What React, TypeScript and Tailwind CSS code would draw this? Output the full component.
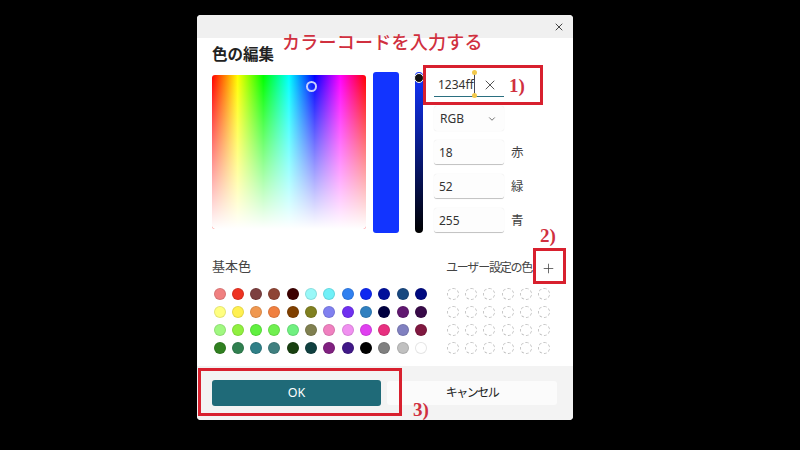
import React from 'react'
import { X, Plus, ChevronDown } from 'lucide-react'

const basicColors = [
  '#f08080', '#ee3322', '#7d4040', '#8e4535', '#3d0000', '#98f8f8', '#70f0f8', '#3080f0', '#0f28f0', '#00109a', '#184880', '#000a80',
  '#ffff80', '#fff050', '#f09850', '#f08040', '#804000', '#808020', '#8080f0', '#7030f0', '#3080c0', '#000040', '#601870', '#380a48',
  '#a0f880', '#90f040', '#60f040', '#70f050', '#70f080', '#808050', '#f080c0', '#f090f0', '#e040f0', '#e83080', '#8080c0', '#801840',
  '#308020', '#308050', '#308088', '#408080', '#184010', '#104040', '#802080', '#401888', '#000000', '#808080', '#c0c0c0', '#ffffff',
]

function Field({ value, label }: { value: string; label: string }) {
  return (
    <div className="flex items-center">
      <div className="flex h-[25px] w-[70px] items-center rounded-[3px] border-b border-[#c4c4c4] bg-[#fdfdfd] pl-[5px] pt-[1px] text-[12px] text-[#333] shadow-[0_0_1px_rgba(0,0,0,0.15)]">
        {value}
      </div>
      <span className="ml-[7px] pt-[2px] text-[12.5px] text-[#444]">{label}</span>
    </div>
  )
}

export default function App() {
  return (
    <div className="h-[450px] w-[800px] overflow-hidden bg-black pl-[197px] pt-[15px] font-['Noto_Sans','Noto_Sans_CJK_JP',sans-serif]">
      <div className="relative flex h-[405px] w-[376px] flex-col rounded-[4px] bg-white">
        <div className="flex h-[23px] items-center justify-end rounded-t-[4px] bg-[#f0f0f0] pr-[8px]">
          <X size={12} strokeWidth={2} className="text-[#444]" />
        </div>

        <div className="flex h-[34px] items-center pl-[15px] text-[15.5px] font-bold text-[#222]">色の編集</div>

        <div className="flex items-start pl-[15px]">
          <div className="relative mt-[3px] h-[154px] w-[154px] overflow-hidden rounded-[3px] bg-[linear-gradient(to_right,#ff0000,#ffff00,#00ff00,#00ffff,#0000ff,#ff00ff,#ff0000)]">
            <div className="absolute inset-0 bg-[linear-gradient(to_top,#ffffff,rgba(255,255,255,0))]" />
            <div className="absolute left-[94px] top-[6px] h-[11px] w-[11px] rounded-full border-2 border-[#c8d0ff]" />
          </div>
          <div className="ml-[7px] h-[161px] w-[26px] rounded-[3px] bg-[#1234ff]" />
          <div className="relative ml-[16px] h-[161px] w-[8px] rounded-full bg-[linear-gradient(to_bottom,#1234ff,#000000)]">
            <div className="absolute -left-[1.5px] top-[1px] h-[10px] w-[10px] rounded-full border-[1.5px] border-white bg-[#111]" />
          </div>
          <div className="ml-[11px] flex flex-col">
            <div className="flex h-[25px] w-[70px] items-center border-b-[1.5px] border-[#2a6f80] pl-[4px] pt-[1px] text-[12px] text-[#333]">
              <span>1234ff</span>
              <X size={16} strokeWidth={1.5} className="ml-[8px] text-[#555]" />
            </div>
            <div className="mt-[9px] flex h-[25px] w-[70px] items-center justify-between rounded-[3px] bg-[#fdfdfd] pl-[6px] pr-[7px] text-[12px] text-[#333] shadow-[0_0_1px_rgba(0,0,0,0.15)]">
              <span>RGB</span>
              <ChevronDown size={10} className="text-[#555]" />
            </div>
            <div className="mt-[9px] flex flex-col gap-[9px]">
              <Field value="18" label="赤" />
              <Field value="52" label="緑" />
              <Field value="255" label="青" />
            </div>
          </div>
        </div>

        <div className="mt-[24px] flex pl-[15px]">
          <div className="w-[234px]">
            <div className="text-[13px] leading-[19px] text-[#444]">基本色</div>
            <div className="mt-[11.5px] grid w-[215px] grid-cols-12 gap-x-[6.3px] gap-y-[6.3px] pl-[1.5px]">
              {basicColors.map((c, i) => (
                <div
                  key={i}
                  className="h-[12px] w-[12px] rounded-full border border-black/10"
                  style={{ backgroundColor: c }}
                />
              ))}
            </div>
          </div>
          <div>
            <div className="flex h-[22px] items-center text-[12px] text-[#444]">
              <span className="w-[90px] whitespace-nowrap tracking-[-1.2px]">ユーザー設定の色</span>
              <Plus size={15} strokeWidth={1.25} className="ml-[4.5px] text-[#444]" />
            </div>
            <div className="ml-[0.5px] mt-[8.5px] grid w-[104px] grid-cols-6 gap-x-[6.4px] gap-y-[6.3px]">
              {Array.from({ length: 24 }).map((_, i) => (
                <div key={i} className="h-[12px] w-[12px] rounded-full border border-dashed border-[#c4c4c4]" />
              ))}
            </div>
          </div>
        </div>

        <div className="mt-auto flex h-[54px] items-center gap-[6px] rounded-b-[4px] bg-[#f3f3f3] px-[15px]">
          <div className="flex h-[26px] w-[169px] items-center justify-center rounded-[3px] bg-[#1f6a78] text-[12.5px] text-white">OK</div>
          <div className="flex h-[24px] w-[170px] items-center justify-center rounded-[3px] bg-[#fbfbfb] text-[12px] tracking-[-1.5px] text-[#222]">キャンセル</div>
        </div>

        {/* annotations drawn over the dialog */}
        <div className="absolute left-[85px] top-[14px] whitespace-nowrap font-['Noto_Sans_CJK_JP',sans-serif] text-[18px] font-medium leading-[24px] tracking-[0.25px] text-[#d0303f]">カラーコードを入力する</div>
        <div className="absolute left-[226px] top-[50px] h-[40px] w-[120px] border-[3px] border-[#d8202e]" />
        <div className="absolute left-[312px] top-[60px] font-['Liberation_Serif',serif] text-[19px] font-bold leading-[22px] text-[#d0303f]">1)</div>
        <div className="absolute left-[276.5px] top-[57px] h-[24px] w-[1px] bg-[#445]" />
        <div className="absolute left-[274.5px] top-[55px] h-[5px] w-[5px] rounded-full bg-[#f2c94c]" />
        <div className="absolute left-[274.5px] top-[78px] h-[5px] w-[5px] rounded-full bg-[#f2c94c]" />
        <div className="absolute left-[336px] top-[233px] h-[36px] w-[33px] border-[3px] border-[#d8202e]" />
        <div className="absolute left-[343px] top-[211px] font-['Liberation_Serif',serif] text-[19px] font-bold leading-[20px] text-[#d0303f]">2)</div>
        <div className="absolute left-[1px] top-[353px] h-[48px] w-[204px] border-[3px] border-[#d8202e]" />
        <div className="absolute left-[216px] top-[385px] font-['Liberation_Serif',serif] text-[19px] font-bold leading-[20px] text-[#d0303f]">3)</div>
      </div>
    </div>
  )
}
